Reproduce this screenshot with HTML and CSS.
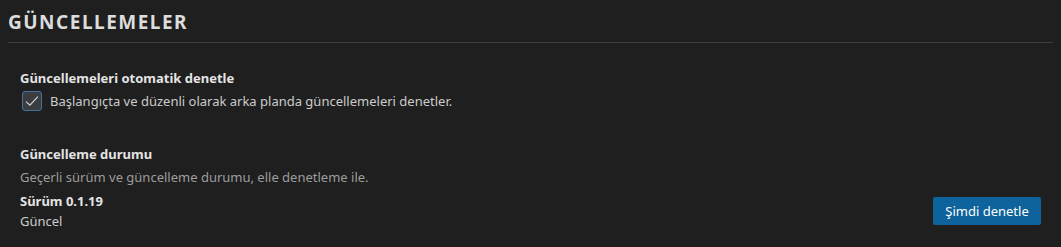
FILE: index.html
```html
<!DOCTYPE html>
<html lang="tr">
<head>
<meta charset="utf-8">
<link rel="stylesheet" href="styles.css">
</head>
<body>
<div class="page">
  <h2 class="heading">GÜNCELLEMELER</h2>
  <div class="content">
    <section class="setting">
      <div class="label">Güncellemeleri otomatik denetle</div>
      <label class="check-row">
        <span class="checkbox">
          <svg width="16" height="16" viewBox="0 0 16 16"><path d="M2 8.6 L5.9 12.2 L14 3.6" fill="none" stroke="#d4d4d4" stroke-width="1.2"/></svg>
        </span>
        <span class="check-text">Başlangıçta ve düzenli olarak arka planda güncellemeleri denetler.</span>
      </label>
    </section>
    <section class="setting status">
      <div class="label">Güncelleme durumu</div>
      <div class="desc">Geçerli sürüm ve güncelleme durumu, elle denetleme ile.</div>
      <div class="status-row">
        <div class="version">
          <div class="label">Sürüm 0.1.19</div>
          <div class="state">Güncel</div>
        </div>
        <button class="btn">Şimdi denetle</button>
      </div>
    </section>
  </div>
</div>
</body>
</html>
```

FILE: styles.css
```css
html, body {
  margin: 0;
  padding: 0;
  background: #1f1f1f;
}
body {
  font-family: "Noto Sans", "Open Sans", sans-serif;
  color: #cccccc;
  font-size: 13px;
}
.page {
  padding: 8px 8px 0 8px;
}
.heading {
  margin: 0;
  font-size: 19px;
  font-weight: 700;
  letter-spacing: 1.5px;
  color: #dcdcdc;
  line-height: 29px;
  padding-bottom: 5px;
  border-bottom: 1px solid #3e3e3e;
}
.content {
  padding: 0 12px;
}
.setting {
  padding-top: 26px;
}
.status {
  padding-top: 34px;
}
.label {
  font-weight: 700;
  color: #e4e4e4;
  line-height: 18px;
}
.check-row {
  display: flex;
  align-items: center;
  gap: 8px;
  margin-top: 4px;
  margin-left: 2px;
}
.checkbox {
  width: 18px;
  height: 18px;
  border: 1px solid #3a73a8;
  border-radius: 3px;
  background: #3c3c3c;
  display: flex;
  align-items: center;
  justify-content: center;
}
.check-text {
  color: #cccccc;
}
.desc {
  color: #9d9d9d;
  margin-top: 5px;
  line-height: 18px;
}
.status-row {
  display: flex;
  justify-content: space-between;
  align-items: center;
  margin-top: 6px;
}
.state {
  line-height: 18px;
  margin-top: 2px;
}
.btn {
  font-family: "Noto Sans", "Open Sans", sans-serif;
  font-size: 13px;
  color: #ffffff;
  background: #0e639c;
  border: none;
  border-radius: 2px;
  width: 108px;
  height: 28px;
  padding: 0;
  margin: 0;
}
```
